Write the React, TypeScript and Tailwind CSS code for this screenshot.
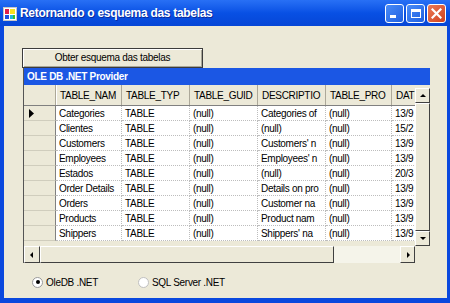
import React from "react";

const colW = ["w-[66px]", "w-[68px]", "w-[68px]", "w-[68px]", "w-[66px]", "w-[40px]"];
const headers = ["TABLE_NAM", "TABLE_TYP", "TABLE_GUID", "DESCRIPTIO", "TABLE_PRO", "DAT"];
const rows = [
  ["Categories", "TABLE", "(null)", "Categories of", "(null)", "13/9"],
  ["Clientes", "TABLE", "(null)", "(null)", "(null)", "15/2"],
  ["Customers", "TABLE", "(null)", "Customers' n", "(null)", "13/9"],
  ["Employees", "TABLE", "(null)", "Employees' n", "(null)", "13/9"],
  ["Estados", "TABLE", "(null)", "(null)", "(null)", "20/3"],
  ["Order Details", "TABLE", "(null)", "Details on pro", "(null)", "13/9"],
  ["Orders", "TABLE", "(null)", "Customer na", "(null)", "13/9"],
  ["Products", "TABLE", "(null)", "Product nam", "(null)", "13/9"],
  ["Shippers", "TABLE", "(null)", "Shippers' na", "(null)", "13/9"],
];

function Arrow({ dir }: { dir: "up" | "down" | "left" | "right" }) {
  const pts =
    dir === "up" ? "1,5 4,2 7,5" : dir === "down" ? "1,2 4,5 7,2" : dir === "left" ? "5,1 2,4 5,7" : "3,1 6,4 3,7";
  return (
    <svg width="8" height="8" viewBox="0 0 8 8">
      <polygon points={pts} fill="#000" />
    </svg>
  );
}

function ScrollBtn({ dir, cls }: { dir: "up" | "down" | "left" | "right"; cls: string }) {
  return (
    <div
      className={`${cls} shrink-0 flex items-center justify-center bg-[#ECE9D8] border-t border-l border-t-white border-l-white border-b border-r border-b-[#404040] border-r-[#404040]`}
    >
      <Arrow dir={dir} />
    </div>
  );
}

export default function App() {
  return (
    <div className="w-[450px] h-[303px] bg-[#0A48DE] flex flex-col overflow-hidden" style={{ fontFamily: "'Liberation Sans', Arial, sans-serif" }}>
      {/* Title bar */}
      <div className="h-[26px] shrink-0 flex items-center pl-[3px] pr-[4px] bg-linear-to-b from-[#2870F5] via-[#0850E4] to-[#0646D6]">
        <svg width="14" height="14" viewBox="0 0 14 14" className="mr-[3px] mt-[1px]">
          <rect x="0.5" y="0.5" width="13" height="13" fill="#fff" stroke="#c8c8c8" />
          <rect x="2" y="2" width="4" height="5" fill="#e0204a" />
          <rect x="7" y="2" width="5" height="5" fill="#f8e020" />
          <rect x="2" y="8" width="4" height="4" fill="#2050e0" />
          <rect x="7" y="8" width="3" height="4" fill="#20b8e0" />
          <rect x="10" y="8" width="2" height="4" fill="#30c030" />
        </svg>
        <span className="text-white font-bold text-[12px] leading-none [text-shadow:1px_1px_0_#0a2a9c] tracking-[-0.3px]">
          Retornando o esquema das tabelas
        </span>
        <div className="flex-1" />
        <div className="flex gap-[2px] mt-[1px]">
          <div className="w-[19px] h-[19px] rounded-[3px] border border-white bg-linear-to-br from-[#4a8cf8] to-[#1f5fe0] flex items-end pl-[4px] pb-[4px]">
            <div className="w-[6px] h-[3px] bg-white" />
          </div>
          <div className="w-[19px] h-[19px] rounded-[3px] border border-white bg-linear-to-br from-[#4a8cf8] to-[#1f5fe0] flex items-center justify-center">
            <div className="w-[10px] h-[9px] border border-white border-t-[3px]" />
          </div>
          <div className="w-[19px] h-[19px] rounded-[3px] border border-white bg-linear-to-br from-[#ec7a55] to-[#d0401c] flex items-center justify-center">
            <svg width="11" height="11" viewBox="0 0 11 11">
              <path d="M1.5 1.5 L9.5 9.5 M9.5 1.5 L1.5 9.5" stroke="#fff" strokeWidth="2.2" strokeLinecap="square" />
            </svg>
          </div>
        </div>
      </div>

      {/* Client area */}
      <div className="flex-1 ml-[4px] mr-[3px] mb-[5px] bg-[#ECE9D8] flex flex-col pl-[18px] pt-[22px] text-[10px] tracking-[-0.3px] text-black">
        <button className="w-[181px] h-[20px] shrink-0 bg-[#ECE9D8] border border-[#3c3c3c] shadow-[inset_1px_1px_0_#ffffff,inset_-1px_-1px_0_#a8a698] text-[10px] tracking-[-0.3px] leading-none text-black">
          Obter esquema das tabelas
        </button>

        {/* DataGrid */}
        <div className="ml-px w-[407px] h-[195px] shrink-0 flex flex-col border-l border-[#555]">
          <div className="h-[17px] shrink-0 bg-[#1B57E4] text-white font-bold text-[10px] leading-[17px] pl-[3px]">
            OLE DB .NET Provider
          </div>
          <div className="flex flex-1 min-h-0">
            <div className="flex-1 min-w-0 overflow-hidden bg-[#ECE9D8] flex flex-col">
              {/* header */}
              <div className="h-[21px] shrink-0 flex border-b border-[#808080]">
                <div className="w-[32px] shrink-0 border-r border-[#aca899] shadow-[1px_0_0_#fff]" />
                {headers.map((h, i) => (
                  <div
                    key={h}
                    className={`${colW[i]} shrink-0 flex items-center pl-[4px] pt-px border-r border-[#aca899] overflow-hidden whitespace-nowrap`}
                  >
                    {h}
                  </div>
                ))}
              </div>
              {rows.map((r, ri) => (
                <div key={ri} className="h-[15px] shrink-0 flex">
                  <div className="w-[32px] shrink-0 bg-[#ECE9D8] border-r border-b border-r-[#808080] border-b-[#d0cdbd] flex items-center pl-[5px]">
                    {ri === 0 && (
                      <svg width="6" height="9" viewBox="0 0 6 9">
                        <polygon points="0,0 5,4.5 0,9" fill="#000" />
                      </svg>
                    )}
                  </div>
                  {r.map((c, ci) => (
                    <div
                      key={ci}
                      className={`${colW[ci]} shrink-0 bg-white flex items-center pl-[3px] pt-px border-r border-b border-dotted border-[#bdbdbd] overflow-hidden whitespace-nowrap leading-none`}
                    >
                      {c}
                    </div>
                  ))}
                </div>
              ))}
            </div>
            {/* vertical scrollbar */}
            <div className="w-[15px] shrink-0 flex flex-col bg-[#ECE9D8]">
              <div className="h-[3px] shrink-0" />
              <ScrollBtn dir="up" cls="h-[15px]" />
              <div className="flex-1 border-r border-b border-[#404040] border-t border-l border-t-white border-l-white" />
              <ScrollBtn dir="down" cls="h-[15px]" />
            </div>
          </div>
          {/* horizontal scrollbar */}
          <div className="h-[17px] shrink-0 flex">
            <ScrollBtn dir="left" cls="w-[16px]" />
            <div className="w-[294px] shrink-0 border-t border-l border-t-white border-l-white border-b border-r border-b-[#404040] border-r-[#404040] bg-[#ECE9D8]" />
            <div className="flex-1 bg-[#F5F4EA]" />
            <ScrollBtn dir="right" cls="w-[15px]" />
            <div className="w-[15px] shrink-0 bg-[#ECE9D8]" />
          </div>
        </div>

        {/* Radios */}
        <div className="mt-[12px] h-[14px] flex items-center pl-[10px]">
          <div className="w-[106px] flex items-center">
            <div className="w-[11px] h-[11px] rounded-full border border-[#9a9a9a] bg-white flex items-center justify-center mr-[3px]">
              <div className="w-[4px] h-[4px] rounded-full bg-black" />
            </div>
            <span>OleDB .NET</span>
          </div>
          <div className="flex items-center">
            <div className="w-[11px] h-[11px] rounded-full border border-[#c0c0c0] bg-white mr-[3px]" />
            <span>SQL Server .NET</span>
          </div>
        </div>
      </div>
    </div>
  );
}
